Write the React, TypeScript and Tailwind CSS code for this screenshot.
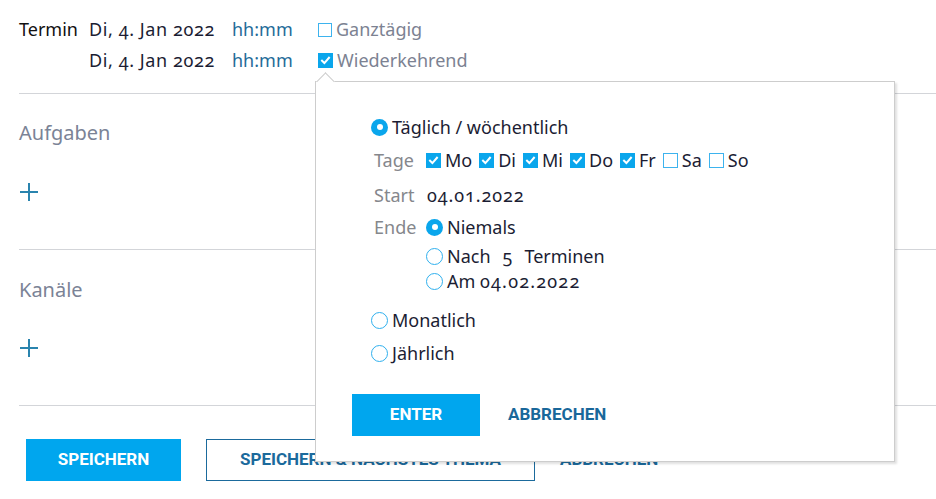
import React from 'react';

const sans = "font-['Noto_Sans','Open_Sans',sans-serif]";
const btnFont = "font-['Roboto','Liberation_Sans',sans-serif] font-bold uppercase";
const onum = '[font-feature-settings:"onum"]';

const Check: React.FC<{ on?: boolean; size?: string }> = ({ on, size = 'h-[15px] w-[15px]' }) =>
  on ? (
    <span className={`${size} inline-flex shrink-0 items-center justify-center bg-[#0aa6ec]`}>
      <svg viewBox="0 0 12 12" className="h-[11px] w-[11px]" fill="none" stroke="white" strokeWidth="2.2" strokeLinecap="square">
        <path d="M2.2 6.2 L4.8 8.8 L9.8 3" />
      </svg>
    </span>
  ) : (
    <span className={`${size} inline-block shrink-0 border border-[#3db3ee] bg-white`} />
  );

const Radio: React.FC<{ on?: boolean }> = ({ on }) =>
  on ? (
    <span className="inline-flex h-[17px] w-[17px] shrink-0 items-center justify-center rounded-full bg-[#0aa6ec]">
      <span className="h-[6px] w-[6px] rounded-full bg-white" />
    </span>
  ) : (
    <span className="inline-block h-[17px] w-[17px] shrink-0 rounded-full border-[1.5px] border-[#2fb0ee] bg-white" />
  );

const Plus = () => (
  <svg viewBox="0 0 18 18" className="h-[18px] w-[18px]" stroke="#2a84ae" strokeWidth="2">
    <path d="M9 0 V18 M0 9 H18" />
  </svg>
);

const days: [string, boolean][] = [
  ['Mo', true],
  ['Di', true],
  ['Mi', true],
  ['Do', true],
  ['Fr', true],
  ['Sa', false],
  ['So', false],
];

function RecurrencePopover() {
  return (
    <div className="absolute left-[315px] top-[81px] h-[381px] w-[580px] border border-[#cdcdcd] bg-white shadow-[2px_2px_2px_rgba(0,0,0,0.12)]">
      {/* notch pointing up at the checkbox */}
      <div className="absolute left-[3px] top-[-7px] h-[13px] w-[13px] rotate-45 border-l border-t border-[#cdcdcd] bg-white" />
      <div className={`pl-[55px] pt-[31px] text-[18px] text-[#1b1d33] ${sans}`}>
        <label className="flex h-[28px] items-center gap-[4px]">
          <Radio on />
          <span>Täglich / wöchentlich</span>
        </label>

        <div className="mt-[5px] flex h-[28px] items-center pl-[3px]">
          <span className="w-[52px] text-[#85878c]">Tage</span>
          <div className="flex items-center gap-[7px]">
            {days.map(([d, on]) => (
              <label key={d} className="flex items-center gap-[4px]">
                <Check on={on} />
                <span>{d}</span>
              </label>
            ))}
          </div>
        </div>

        <div className="mt-[7px] flex h-[28px] items-center pl-[3px]">
          <span className="w-[53px] text-[#85878c]">Start</span>
          <span className={`tracking-[0.9px] ${onum}`}>04.01.2022</span>
        </div>

        <div className="mt-[3px] flex pl-[3px]">
          <span className="flex h-[30px] w-[52px] items-center text-[#85878c]">Ende</span>
          <div className="flex flex-col">
            <label className="flex h-[30px] items-center gap-[4px]">
              <Radio on />
              <span>Niemals</span>
            </label>
            <label className="flex h-[28px] items-center gap-[4px]">
              <Radio />
              <span>Nach</span>
              <span className={`px-[8px] ${onum}`}>5</span>
              <span>Terminen</span>
            </label>
            <label className="flex h-[22px] items-center gap-[4px]">
              <Radio />
              <span>
                Am <span className={`tracking-[1.2px] ${onum}`}>04.02.2022</span>
              </span>
            </label>
          </div>
        </div>

        <label className="mt-[14px] flex h-[28px] items-center gap-[4px]">
          <Radio />
          <span>Monatlich</span>
        </label>
        <label className="mt-[5px] flex h-[28px] items-center gap-[4px]">
          <Radio />
          <span>Jährlich</span>
        </label>

        <div className="mt-[27px] flex items-center gap-[28px]">
          <button className={`-ml-[19px] h-[42px] w-[128px] bg-[#00a6ee] text-[17px] text-white ${btnFont}`}>Enter</button>
          <button className={`text-[17px] text-[#19679a] ${btnFont}`}>Abbrechen</button>
        </div>
      </div>
    </div>
  );
}

export default function App() {
  return (
    <div className={`relative h-[499px] w-[936px] overflow-hidden bg-white pl-[19px] ${sans}`}>
      <div className="pt-[14px] text-[18px]">
        <div className="flex h-[31px] items-center">
          <span className="w-[70px] text-[#111]">Termin</span>
          <span className={`w-[143px] tracking-[0.6px] text-[#1b1d33] ${onum}`}>Di, 4. Jan 2022</span>
          <span className="w-[86px] text-[#1f6c99]">hh:mm</span>
          <label className="flex items-center gap-[4px] text-[#7c8292]">
            <Check size="h-[14px] w-[14px]" />
            <span>Ganztägig</span>
          </label>
        </div>
        <div className="flex h-[31px] items-center">
          <span className="w-[70px]" />
          <span className={`w-[143px] tracking-[0.6px] text-[#1b1d33] ${onum}`}>Di, 4. Jan 2022</span>
          <span className="w-[86px] text-[#1f6c99]">hh:mm</span>
          <label className="flex items-center gap-[4px] text-[#7c8292]">
            <Check on size="h-[15px] w-[15px]" />
            <span>Wiederkehrend</span>
          </label>
        </div>
      </div>

      <div className="mt-[17px] border-t border-[#d3d5d9]" />

      <section className="border-b border-[#d3d5d9] pb-[48px] pt-[27px]">
        <h2 className="flex h-[24px] items-center text-[20px] text-[#7b8396]">Aufgaben</h2>
        <div className="mt-[38px] pl-[1px]">
          <Plus />
        </div>
      </section>

      <section className="border-b border-[#d3d5d9] pb-[48px] pt-[28px]">
        <h2 className="flex h-[24px] items-center text-[20px] text-[#7b8396]">Kanäle</h2>
        <div className="mt-[37px] pl-[1px]">
          <Plus />
        </div>
      </section>

      <div className="ml-[7px] mt-[33px] flex items-center">
        <button className={`h-[42px] w-[155px] bg-[#00a6ee] text-[17px] text-white ${btnFont}`}>Speichern</button>
        <button className={`ml-[25px] h-[42px] w-[329px] border border-[#1b6a9c] text-[17px] text-[#1b6a9c] ${btnFont}`}>
          Speichern &amp; Nächstes Thema
        </button>
        <button className={`ml-[25px] text-[17px] text-[#1b6a9c] ${btnFont}`}>Abbrechen</button>
      </div>

      <RecurrencePopover />
    </div>
  );
}
